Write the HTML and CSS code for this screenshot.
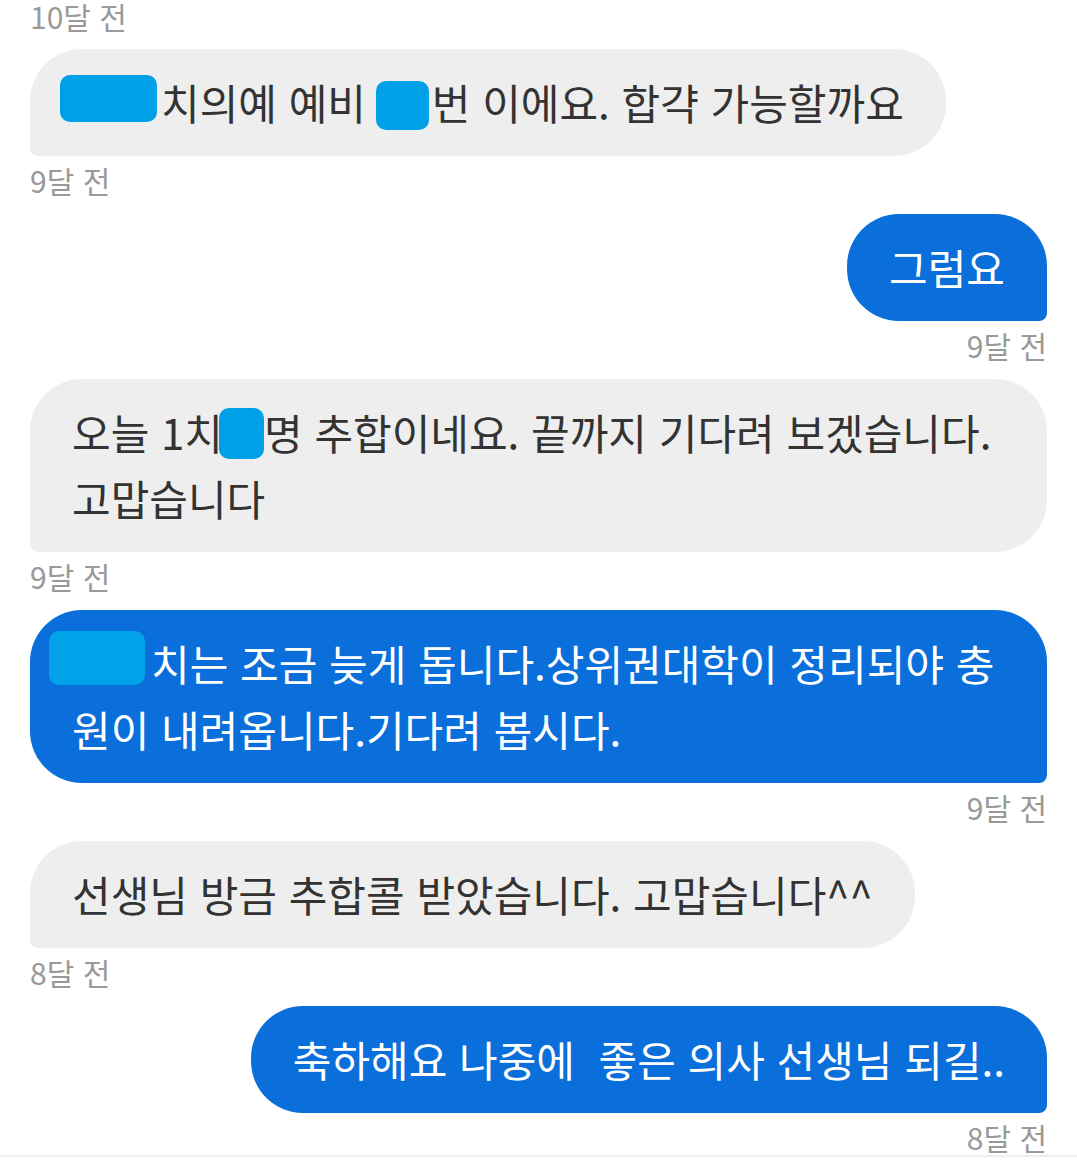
FILE: index.html
```html
<!DOCTYPE html>
<html lang="ko">
<head>
    <meta charset="UTF-8">
    <meta name="viewport" content="width=device-width, initial-scale=1.0">
    <title>상담 메시지</title>
    <link rel="stylesheet" href="styles.css">
</head>
<body>
    <div class="chat">
        <div class="stamp first">10달 전</div>

        <div class="msg in">
            <div class="bubble"><span class="hide hide-a"></span>치의예 예비 <span class="hide hide-b"></span>번 이에요. 합갹 가능할까요</div>
            <div class="stamp">9달 전</div>
        </div>

        <div class="msg out">
            <div class="bubble">그럼요</div>
            <div class="stamp">9달 전</div>
        </div>

        <div class="msg in">
            <div class="bubble wide">오늘 1치<span class="hide hide-c"></span>명 추합이네요. 끝까지 기다려 보겠습니다.<br>고맙습니다</div>
            <div class="stamp">9달 전</div>
        </div>

        <div class="msg out">
            <div class="bubble wide"><span class="hide hide-d"></span>치는 조금 늦게 돕니다.상위권대학이 정리되야 충<br>원이 내려옵니다.기다려 봅시다.</div>
            <div class="stamp">9달 전</div>
        </div>

        <div class="msg in">
            <div class="bubble">선생님 방금 추합콜 받았습니다. 고맙습니다^^</div>
            <div class="stamp">8달 전</div>
        </div>

        <div class="msg out">
            <div class="bubble">축하해요 나중에&nbsp; 좋은 의사 선생님 되길..</div>
            <div class="stamp end">8달 전</div>
        </div>
    </div>
    <div class="composer"></div>
</body>
</html>
```

FILE: styles.css
```css
body {
    font-family: "Noto Sans CJK KR", "Noto Sans", sans-serif;
    background-color: #fff;
    margin: 0;
    padding: 0;
}
.chat {
    display: flex;
    flex-direction: column;
    padding: 0 30px;
}
.msg {
    display: flex;
    flex-direction: column;
    align-items: flex-start;
}
.msg.out {
    align-items: flex-end;
}
.bubble {
    font-size: 42px;
    line-height: 66px;
    padding: 20px 42px 21px;
    color: #333;
    background-color: #eee;
    border-radius: 52px 52px 52px 8px;
    white-space: nowrap;
}
.msg.out .bubble {
    color: #fff;
    background-color: #0a6fdb;
    border-radius: 52px 52px 8px 52px;
}
.bubble.wide {
    align-self: stretch;
}
.stamp {
    font-size: 30px;
    line-height: 30px;
    padding: 9px 0 19px;
    color: #999;
}
.stamp.first {
    padding-top: 1px;
    padding-bottom: 18px;
}
.stamp.end {
    padding-bottom: 3px;
}
.hide {
    display: inline-block;
    vertical-align: top;
    background-color: #00a0e6;
    border-radius: 10px;
}
.hide-a {
    width: 97px;
    height: 47px;
    margin: 6px 4px 0 -12px;
}
.hide-b {
    width: 53px;
    height: 49px;
    margin: 12px 3px 0 -2px;
}
.hide-c {
    width: 45px;
    height: 51px;
    margin: 9px 0 0 -4px;
}
.hide-d {
    width: 96px;
    height: 54px;
    margin: 1px 6px 0 -23px;
    background-color: #02a2e8;
}
.composer {
    border-top: 2px solid #eee;
    height: 40px;
}
```
